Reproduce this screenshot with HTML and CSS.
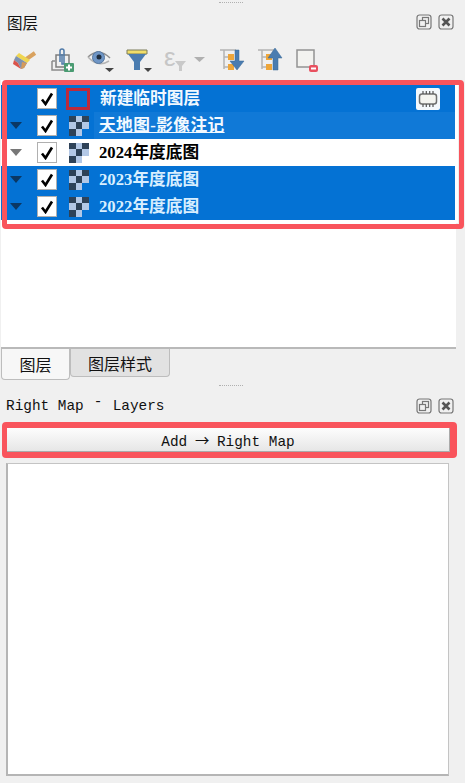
FILE: index.html
```html
<!DOCTYPE html>
<html lang="zh-CN">

<head>
    <meta charset="UTF-8">
    <title>图层</title>
    <link rel="stylesheet" href="styles.css">
</head>

<body>
    <div class="grip grip-top"></div>

    <header class="dock-head">
        <span class="dock-title">图层</span>
        <span class="dock-btns">
            <svg class="dock-btn" viewBox="0 0 16 16"><rect x="1" y="1" width="14" height="14" rx="2.5"/><rect x="6.5" y="3.5" width="6" height="6"/><rect x="3.5" y="6.5" width="6" height="6" fill="#f0f0f0"/></svg>
            <svg class="dock-btn" viewBox="0 0 16 16"><rect x="1" y="1" width="14" height="14" rx="2.5"/><path class="dock-x" d="M4.5 4.5l7 7M11.5 4.5l-7 7"/></svg>
        </span>
    </header>

    <nav class="toolbar">
        <!-- brush -->
        <svg class="tool" viewBox="0 0 24 24">
            <path d="M23 5l-10 7" stroke="#d9a25f" stroke-width="4" fill="none"/>
            <path d="M7 5l11 7-3 3L4 8z" fill="#efd651"/>
            <path d="M4 8l11 7-3 5-3 1-3-6-4-3z" fill="#7f93b0"/>
            <path d="M2 12l4 3 3 6-8-5z" fill="#d9534a"/>
            <path d="M10 14l5 1-3 5-3 1z" fill="#d49a5c"/>
        </svg>
        <!-- add group -->
        <svg class="tool" viewBox="0 0 24 24">
            <path d="M2 13h3M2 13v9h12" stroke="#8a8a8a" stroke-width="1.5" fill="none"/>
            <rect x="6" y="7" width="13" height="12" fill="#f0f0f0" stroke="#7d7d7d" stroke-width="1.5"/>
            <path d="M10 14V3a2 2 0 0 1 4 0v13h-2V6" stroke="#4e79a8" stroke-width="1.5" fill="none"/>
            <rect x="14" y="15" width="10" height="9" rx="1" fill="#4a9b72"/>
            <path d="M19 16.5v6M16 19.5h6" stroke="#fff" stroke-width="2"/>
        </svg>
        <!-- eye -->
        <svg class="tool" viewBox="0 0 24 24">
            <path d="M0 9Q11-1 22 10" stroke="#8c8c8c" stroke-width="1.5" fill="none"/>
            <path d="M0 9Q10 20 21 13" stroke="#b5b5b5" stroke-width="1.5" fill="#f6f6f6"/>
            <circle cx="10.5" cy="9.5" r="6" fill="#6f96c6" stroke="#55779f"/>
            <circle cx="11" cy="9" r="2.5" fill="#1f2d3d"/>
            <path class="tool-arrow" d="M17 20h9l-4.5 4z"/>
        </svg>
        <!-- filter -->
        <svg class="tool" viewBox="0 0 24 24">
            <path d="M1 2h20v4H1z" fill="#f0de6a" stroke="#7c7c5a"/>
            <path d="M2 6h18l-6 8v8h-6v-8z" fill="#4a7cb0"/>
            <path class="tool-arrow" d="M18 20h8l-4 4z"/>
        </svg>
        <!-- expression filter -->
        <svg class="tool tool-wide" viewBox="0 0 42 24">
            <text class="tool-eps" x="0" y="18">ε</text>
            <path d="M11 13h11l-4 5v5h-3v-5z" fill="#c9c9c9"/>
            <path d="M30 9h11l-5.5 5z" fill="#b0b0b0"/>
        </svg>
        <!-- expand all -->
        <svg class="tool" viewBox="0 0 24 24">
            <path d="M0 2h16M4 2v19M4 9h6M4 19h6" stroke="#b3b3b3" stroke-width="1.5" fill="none"/>
            <rect x="8" y="6" width="6" height="6" fill="#eea63a"/>
            <rect x="8" y="16" width="6" height="6" fill="#eea63a"/>
            <path d="M15 2h4v11h5l-7 9-7-9h5z" fill="#4a7cb0" stroke="#3b6896" stroke-width=".5"/>
        </svg>
        <!-- collapse all -->
        <svg class="tool" viewBox="0 0 24 24">
            <path d="M0 2h16M4 2v19M4 9h6M4 19h6" stroke="#b3b3b3" stroke-width="1.5" fill="none"/>
            <rect x="8" y="6" width="6" height="6" fill="#eea63a"/>
            <rect x="8" y="16" width="6" height="6" fill="#eea63a"/>
            <path d="M17 0l7 10h-4v12h-5V10h-5z" fill="#4a7cb0" stroke="#3b6896" stroke-width=".5"/>
        </svg>
        <!-- remove layer -->
        <svg class="tool" viewBox="0 0 24 24">
            <rect x="1" y="2" width="17" height="17" fill="#f3f3f0" stroke="#939393" stroke-width="1.5"/>
            <rect x="13" y="17" width="9" height="7" rx="2" fill="#e8505f"/>
            <path d="M15 20.5h5" stroke="#fff" stroke-width="2"/>
        </svg>
    </nav>

    <section class="tree">
        <div class="rows">
            <div class="row selected">
                <span class="twisty"></span>
                <span class="check"><svg viewBox="0 0 14 14"><path d="M2 7.500l3.500 4.500L12 1.500"/></svg></span>
                <span class="temp-icon"></span>
                <span class="name">新建临时图层</span>
                <span class="chip">
                    <svg viewBox="0 0 20 18"><rect x="1.500" y="4" width="17" height="10" rx="2.500" fill="#f4f4f0" stroke="#6f6f6f" stroke-width="1.500"/><path d="M5 1v3M8.300 1v3M11.700 1v3M15 1v3M5 14v3M8.300 14v3M11.700 14v3M15 14v3" stroke="#555" stroke-width="1.200"/></svg>
                </span>
            </div>
            <div class="row selected hover">
                <span class="twisty"></span>
                <span class="check"><svg viewBox="0 0 14 14"><path d="M2 7.500l3.500 4.500L12 1.500"/></svg></span>
                <span class="raster"><i></i><i></i><i></i><i></i><i></i><i></i><i></i><i></i><i></i></span>
                <span class="name-band"><span class="name-link">天地图-影像注记</span></span>
            </div>
            <div class="row">
                <span class="twisty"></span>
                <span class="check"><svg viewBox="0 0 14 14"><path d="M2 7.500l3.500 4.500L12 1.500"/></svg></span>
                <span class="raster"><i></i><i></i><i></i><i></i><i></i><i></i><i></i><i></i><i></i></span>
                <span class="name">2024年度底图</span>
            </div>
            <div class="row selected">
                <span class="twisty"></span>
                <span class="check"><svg viewBox="0 0 14 14"><path d="M2 7.500l3.500 4.500L12 1.500"/></svg></span>
                <span class="raster"><i></i><i></i><i></i><i></i><i></i><i></i><i></i><i></i><i></i></span>
                <span class="name">2023年度底图</span>
            </div>
            <div class="row selected">
                <span class="twisty"></span>
                <span class="check"><svg viewBox="0 0 14 14"><path d="M2 7.500l3.500 4.500L12 1.500"/></svg></span>
                <span class="raster"><i></i><i></i><i></i><i></i><i></i><i></i><i></i><i></i><i></i></span>
                <span class="name">2022年度底图</span>
            </div>
        </div>
        <div class="mark mark-tree"></div>
    </section>

    <div class="tabs">
        <span class="tab active">图层</span>
        <span class="tab">图层样式</span>
    </div>

    <div class="grip grip-mid"></div>

    <header class="dock-head dock-head-right">
        <span class="dock-title-mono">Right Map <span class="dash">-</span> Layers</span>
        <span class="dock-btns">
            <svg class="dock-btn" viewBox="0 0 16 16"><rect x="1" y="1" width="14" height="14" rx="2.5"/><rect x="6.5" y="3.5" width="6" height="6"/><rect x="3.5" y="6.5" width="6" height="6" fill="#f0f0f0"/></svg>
            <svg class="dock-btn" viewBox="0 0 16 16"><rect x="1" y="1" width="14" height="14" rx="2.5"/><path class="dock-x" d="M4.5 4.5l7 7M11.5 4.5l-7 7"/></svg>
        </span>
    </header>

    <div class="add-wrap">
        <button class="add-btn">Add <span class="arrow">→</span> Right Map</button>
        <div class="mark mark-add"></div>
    </div>

    <div class="list"></div>
</body>

</html>
```

FILE: styles.css
```css
* {
    box-sizing: border-box;
}

html,
body {
    margin: 0;
    height: 783px;
    overflow: hidden;
}

body {
    background: #f0f0f0;
    color: #111;
    font-family: "Liberation Serif", "Noto Sans CJK SC", serif;
}

.grip {
    width: 24px;
    height: 1px;
    border-top: 1px dotted #b0b0b0;
}

.grip-top {
    margin: 2px 0 0 219px;
}

.grip-mid {
    margin: 5px 0 0 219px;
}

.dock-head {
    display: flex;
    justify-content: space-between;
    align-items: center;
    height: 22px;
    margin-top: 8px;
    padding: 0 11px 0 7px;
}

.dock-title {
    font-size: 15.500px;
}

.dock-btns {
    display: flex;
    gap: 6px;
}

.dock-btn {
    width: 16px;
    height: 16px;
    fill: none;
    stroke: #777;
    stroke-width: 1.2;
}

.dock-x {
    stroke: #555;
    stroke-width: 2.6;
}

.toolbar {
    display: flex;
    gap: 14px;
    height: 24px;
    margin-top: 15px;
    padding-left: 12px;
}

.tool {
    width: 24px;
    height: 24px;
    overflow: visible;
}

.tool-wide {
    width: 42px;
}

.tool-arrow {
    fill: #444;
}

.tool-eps {
    font-family: "Liberation Sans", sans-serif;
    font-size: 26px;
    fill: #c6c6c6;
}

.tree {
    position: relative;
    width: 455px;
    height: 269px;
    margin: 8px 0 0 1px;
    background: #fff;
    border-bottom: 2px solid #b9b9b9;
}

.rows {
    width: 457px;
    height: 143px;
    padding: 5px 3px 3px 0;
    background: #fff;
}

.row {
    display: flex;
    align-items: center;
    height: 27px;
    font-size: 16.700px;
    font-weight: bold;
    line-height: 27px;
    color: #000;
}

.row.selected {
    background: #0472d4;
    color: #d9efff;
}

.row:first-child {
    color: #f2f9ff;
}

.twisty {
    width: 12px;
    height: 7px;
    margin-left: 9px;
    background: #777;
    clip-path: polygon(0 0, 100% 0, 50% 100%);
}

.row.selected .twisty {
    background: #0b3763;
}

.row:first-child .twisty {
    visibility: hidden;
}

.check {
    display: flex;
    align-items: center;
    justify-content: center;
    width: 20px;
    height: 21px;
    margin-left: 15px;
    background: #fff;
    border: 1px solid #b0b0b0;
}

.check svg {
    width: 14px;
    height: 14px;
    fill: none;
    stroke: #000;
    stroke-width: 2.600;
}

.temp-icon {
    width: 24px;
    height: 22px;
    margin-left: 9px;
    border: 3px solid #bd2a3c;
}

.raster {
    display: grid;
    grid-template-columns: repeat(3, 1fr);
    width: 20px;
    height: 20px;
    margin-left: 12px;
}

.raster i:nth-child(odd) {
    background: #2e4258;
}

.raster i:nth-child(even) {
    background: #b3c8e6;
}

.raster i:nth-child(9) {
    background: none;
}

.name {
    margin-left: 10px;
}

.name-band {
    flex: 1;
    align-self: stretch;
    margin-left: 5px;
    padding-left: 5px;
    background: #1079d7;
}

.name-link {
    letter-spacing: .4px;
    color: #f2f9ff;
    text-decoration: underline;
}

.chip {
    display: flex;
    align-items: center;
    justify-content: center;
    width: 24px;
    height: 22px;
    margin-left: auto;
    margin-right: 15px;
    background: #f4f8fc;
    border-radius: 2px;
}

.chip svg {
    width: 20px;
    height: 18px;
}

.mark {
    position: absolute;
    border: 5px solid #f9545c;
    border-radius: 4px;
    pointer-events: none;
}

.mark-tree {
    left: 1px;
    top: 0;
    width: 462px;
    height: 149px;
}

.tabs {
    display: flex;
    align-items: flex-start;
    height: 31px;
    padding-left: 1px;
}

.tab {
    display: flex;
    align-items: center;
    justify-content: center;
    width: 100px;
    height: 28px;
    font-size: 16px;
    background: #e2e2e2;
    border: 1px solid #bdbdbd;
    border-top: 0;
    border-radius: 0 0 4px 4px;
}

.tab.active {
    width: 69px;
    height: 31px;
    background: #f7f7f7;
}

.dock-head-right {
    height: 20px;
    margin-top: 10px;
    padding: 0 11px 0 6px;
}

.dock-title-mono {
    font-family: "Liberation Mono", monospace;
    font-size: 14.400px;
}

.dash {
    position: relative;
    top: -4px;
    margin: 0 1.500px;
}

.add-wrap {
    position: relative;
    height: 24px;
    margin: 12px 0 0 7px;
    width: 443px;
}

.add-btn {
    display: block;
    width: 100%;
    height: 100%;
    padding: 0;
    font-family: "Liberation Mono", monospace;
    font-size: 14.400px;
    color: #111;
    background: linear-gradient(#fdfdfd, #e6e6e6);
    border: 0;
    border-right: 1px solid #aaa;
    border-bottom: 1px solid #aaa;
}

.arrow {
    font-family: "Noto Sans CJK SC", sans-serif;
    margin: 0 -1px;
}

.mark-add {
    left: -5px;
    top: -6px;
    width: 455px;
    height: 36px;
    border-width: 6px 7px 6px 5px;
}

.list {
    width: 443px;
    height: 313px;
    margin: 11px 0 0 6px;
    background: #fff;
    border: 1px solid #c4c4c4;
    border-left: 2px solid #b5b5b5;
    border-bottom: 2px solid #b5b5b5;
}
```
